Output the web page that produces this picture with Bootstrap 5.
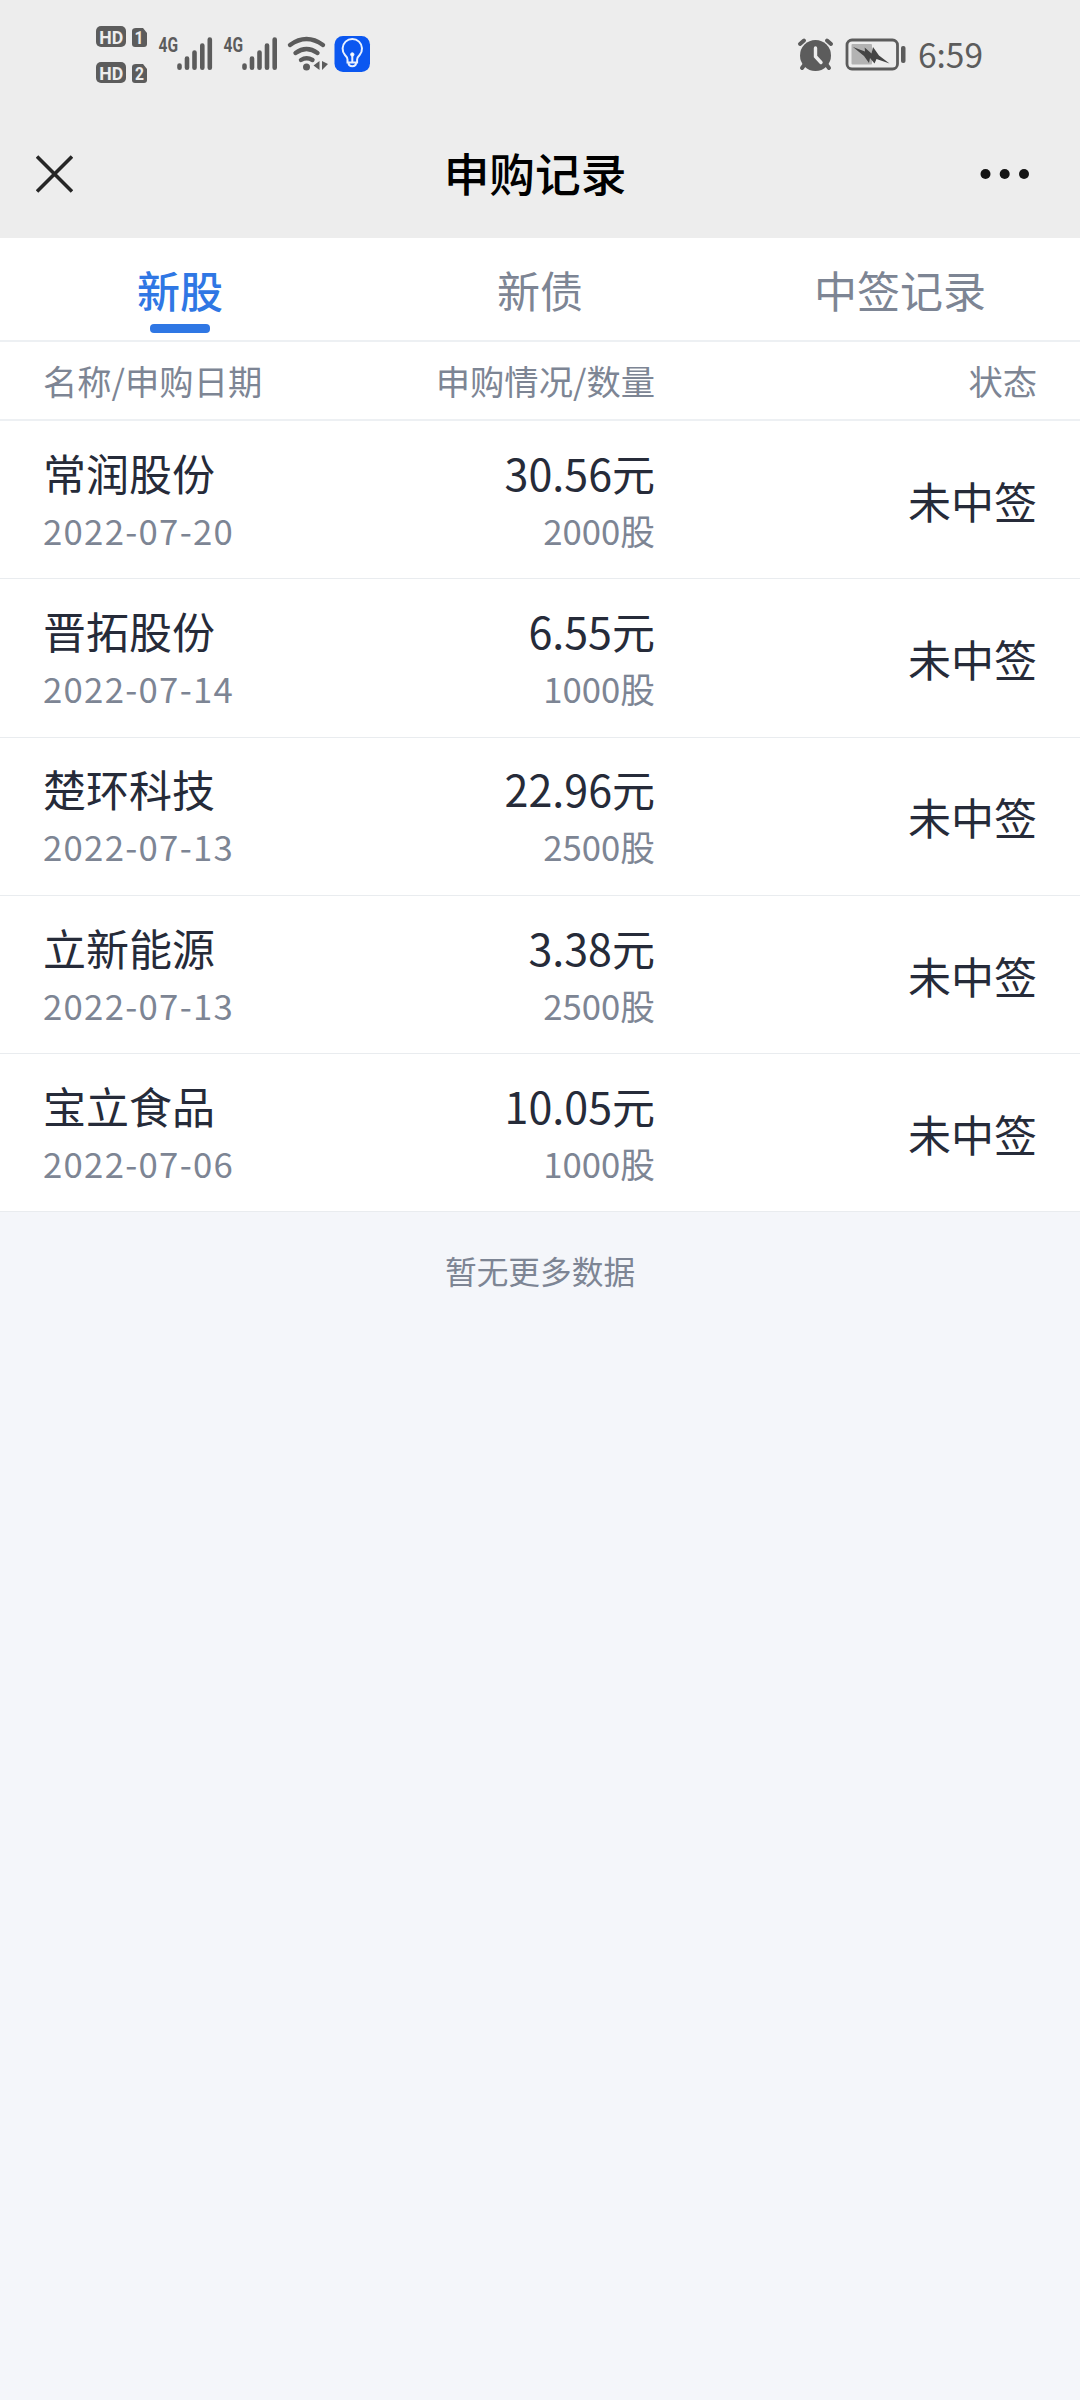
<!DOCTYPE html>
<html lang="zh-CN">
<head>
<meta charset="utf-8">
<meta name="viewport" content="width=device-width, initial-scale=1">
<title>申购记录</title>
<link href="https://cdn.jsdelivr.net/npm/bootstrap@5.3.0/dist/css/bootstrap.min.css" rel="stylesheet">
<style>
body{font-family:"Noto Sans CJK SC","Noto Sans",sans-serif;background:#f4f6fa;color:#262b39;min-height:2400px;line-height:1}
.topbar{background:#ededed;height:238px}
.statusbar{height:110px;color:#5c5c5c}
.statusbar svg{display:block}
.titlebar{height:128px;padding:0 50px 0 36px}
.page-title{font-size:45.7px;font-weight:500;color:#000;line-height:1;margin:0 0 3px 17px}
.tabs-line{height:104px;border-bottom:2px solid #edf0f3}
.tabs-line .nav-link{font-size:43px;line-height:1;color:#7d8594;padding:30px 0 0;height:102px}
.tabs-line .nav-link.active{color:#2f77e4;font-weight:500}
.tab-mark{display:block;width:60px;height:9px;border-radius:4px;background:#2f77e4;margin:13px auto 0}
.side-pad{padding-left:43px;padding-right:43px}
.cell-mid{width:312px}
.cell-name{width:300px}
.head-line{height:79px;font-size:34.3px;color:#7d8594;border-bottom:2px solid #edf0f3}
.rec{height:158.3px;border-bottom:1.5px solid #e9ecef}
.big{font-size:43px;line-height:58px}
.sub{font-size:34.7px;line-height:58px;color:#7d8594}
.rec-pair{padding-top:2px}
.stamp{letter-spacing:1.3px}
.more-tip{font-size:31.7px;color:#7d8594;padding-top:43px}
</style>
<script src="https://cdn.jsdelivr.net/npm/bootstrap@5.3.0/dist/js/bootstrap.bundle.min.js"></script>
</head>
<body>
<header class="topbar">
  <div class="statusbar">
    <svg width="1080" height="110" viewBox="0 0 1080 110" fill="#5c5c5c" font-family="Roboto,sans-serif" font-weight="700">
      <rect x="96" y="26" width="30" height="21" rx="5"/>
      <path d="M136 28h7l4 5v11q0 3-3 3h-9q-3 0-3-3V31q0-3 4-3z"/>
      <rect x="96" y="62" width="30" height="21" rx="5"/>
      <path d="M136 64h7l4 5v11q0 3-3 3h-9q-3 0-3-3V67q0-3 4-3z"/>
      <g fill="#ededed" font-size="18.500" text-anchor="middle">
        <text x="111.300" y="43.500" textLength="24" lengthAdjust="spacingAndGlyphs">HD</text>
        <text x="111.300" y="79.500" textLength="24" lengthAdjust="spacingAndGlyphs">HD</text>
        <text x="139" y="44" font-size="18" textLength="9" lengthAdjust="spacingAndGlyphs">1</text>
        <text x="139.500" y="80" font-size="18" textLength="9" lengthAdjust="spacingAndGlyphs">2</text>
      </g>
      <text x="158.500" y="51.500" font-size="20" textLength="19.500" lengthAdjust="spacingAndGlyphs">4G</text>
      <text x="223.500" y="51.500" font-size="20" textLength="19.500" lengthAdjust="spacingAndGlyphs">4G</text>
      <g stroke="#5c5c5c" stroke-width="4.600" stroke-linecap="round" fill="none">
        <path d="M179.500 65.500v2.200M187 58.500v9.200M194.500 52.500v15.200M202.300 45.500v22.200M209.800 39.500v28.200"/>
        <path d="M244.500 65.500v2.200M252 58.500v9.200M259.500 52.500v15.200M267 45.500v22.200M274.700 39.500v28.200"/>
        <path d="M290 45Q306.500 33 323 45M295.500 53Q306.500 45 317.500 53M301 60Q306.500 56.500 312.500 60" stroke-width="4.400"/>
      </g>
      <circle cx="306.500" cy="67" r="3.500"/>
      <path d="M319.500 61v9l-6-4.500zM322 61v9l6-6z"/>
      <rect x="334.500" y="36" width="35.500" height="36" rx="8.500" fill="#0b57f0"/>
      <g fill="none" stroke="#e9f1ff" stroke-width="2">
        <path d="M347.500 62.500v-3q0-2-2.500-4.500a9.700 9.700 0 1 1 14.600 0q-2.500 2.500-2.500 4.500v3zM352.300 55v7.500M348.500 62.500q0 3.800 3.800 3.800t3.800-3.800"/>
        <circle cx="352.300" cy="54.500" r="1.700" fill="#fff" stroke-width="1"/>
      </g>
      <circle cx="815.500" cy="55.500" r="15.500"/>
      <g stroke="#5c5c5c" stroke-width="4" stroke-linecap="round">
        <path d="M800 44l4-3.500M831 44l-4-3.500M805 64l-3 4M826 64l3 4"/>
      </g>
      <path d="M815.500 48v8.500l5.500 6" fill="none" stroke="#ededed" stroke-width="3.400" stroke-linecap="round"/>
      <rect x="847" y="40" width="50.500" height="29" rx="5" fill="none" stroke="#5c5c5c" stroke-width="2.800"/>
      <rect x="851.500" y="44" width="20.500" height="20.500" rx="1" fill="#b3b3b3"/>
      <rect x="901" y="46" width="4.500" height="17" rx="2"/>
      <path d="M853 47l12 4.500-.3-4 6.800 6 1.500-6.500 6 8.500 10.500 8-13-4.500-2 4.500-4.500-5.500-1 5-5-7z" fill="#454545"/>
      <text x="918" y="67.500" font-family="Noto Sans CJK SC,sans-serif" font-weight="400" font-size="33.500" textLength="65" lengthAdjust="spacingAndGlyphs">6:59</text>
    </svg>
  </div>
  <div class="titlebar d-flex align-items-center justify-content-between">
    <svg width="37" height="38" viewBox="0 0 37 38" fill="none" stroke="#262626" stroke-width="3.600"><path d="M1 1.500l35 35M36 1.500l-35 35"/></svg>
    <h1 class="page-title">申购记录</h1>
    <svg width="50" height="12" viewBox="0 0 50 12" fill="#151515"><circle cx="5.500" cy="6" r="5"/><circle cx="24.700" cy="6" r="5"/><circle cx="44" cy="6" r="5"/></svg>
  </div>
</header>
<main>
  <nav class="tabs-line nav nav-fill flex-nowrap bg-white">
    <a class="nav-link active col-4" href="#">新股<span class="tab-mark"></span></a>
    <a class="nav-link col-4" href="#">新债</a>
    <a class="nav-link col-4" href="#">中签记录</a>
  </nav>
  <div class="head-line side-pad d-flex align-items-center bg-white">
    <div class="cell-name">名称/申购日期</div><div class="cell-mid text-end">申购情况/数量</div><div class="flex-fill text-end">状态</div>
  </div>
  <section class="bg-white">
    <div class="rec side-pad d-flex align-items-center">
      <div class="cell-name rec-pair"><div class="big">常润股份</div><div class="sub stamp">2022-07-20</div></div>
      <div class="cell-mid rec-pair text-end"><div class="big">30.56元</div><div class="sub">2000股</div></div>
      <div class="flex-fill text-end big">未中签</div>
    </div>
    <div class="rec side-pad d-flex align-items-center">
      <div class="cell-name rec-pair"><div class="big">晋拓股份</div><div class="sub stamp">2022-07-14</div></div>
      <div class="cell-mid rec-pair text-end"><div class="big">6.55元</div><div class="sub">1000股</div></div>
      <div class="flex-fill text-end big">未中签</div>
    </div>
    <div class="rec side-pad d-flex align-items-center">
      <div class="cell-name rec-pair"><div class="big">楚环科技</div><div class="sub stamp">2022-07-13</div></div>
      <div class="cell-mid rec-pair text-end"><div class="big">22.96元</div><div class="sub">2500股</div></div>
      <div class="flex-fill text-end big">未中签</div>
    </div>
    <div class="rec side-pad d-flex align-items-center">
      <div class="cell-name rec-pair"><div class="big">立新能源</div><div class="sub stamp">2022-07-13</div></div>
      <div class="cell-mid rec-pair text-end"><div class="big">3.38元</div><div class="sub">2500股</div></div>
      <div class="flex-fill text-end big">未中签</div>
    </div>
    <div class="rec side-pad d-flex align-items-center">
      <div class="cell-name rec-pair"><div class="big">宝立食品</div><div class="sub stamp">2022-07-06</div></div>
      <div class="cell-mid rec-pair text-end"><div class="big">10.05元</div><div class="sub">1000股</div></div>
      <div class="flex-fill text-end big">未中签</div>
    </div>
  </section>
  <div class="more-tip text-center">暂无更多数据</div>
</main>
</body>
</html>
